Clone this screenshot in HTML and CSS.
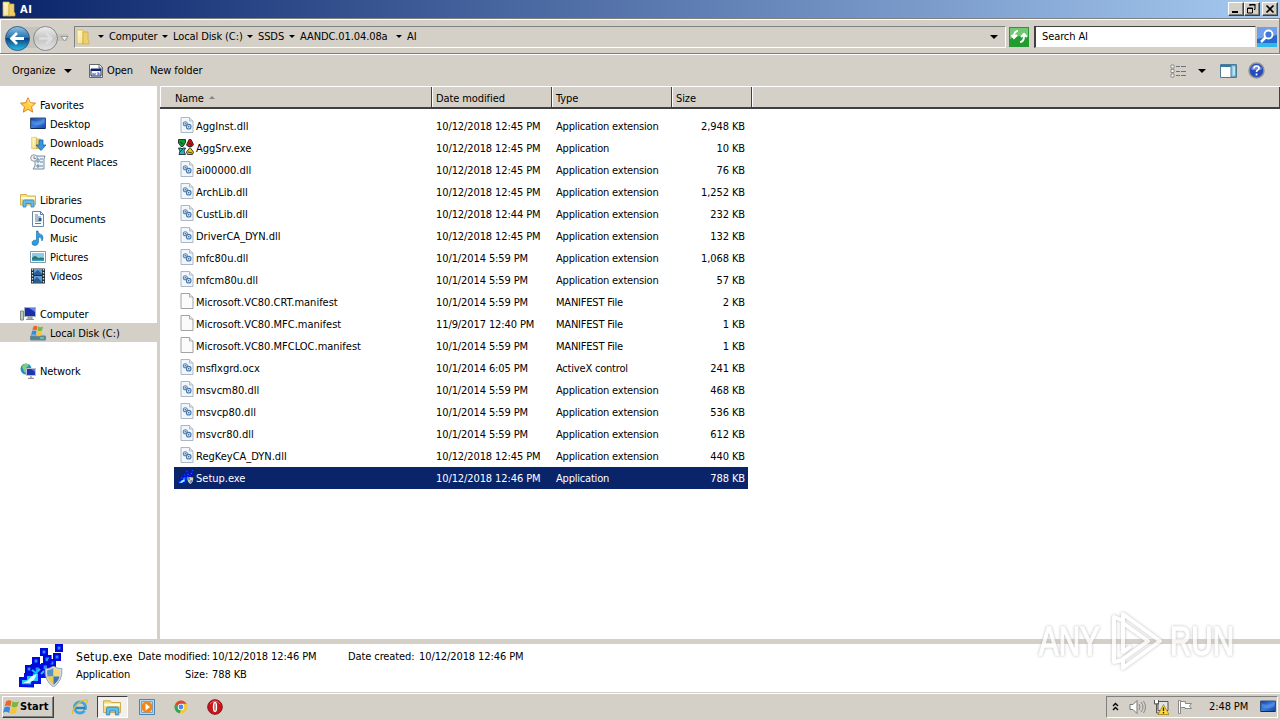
FILE: index.html
```html
<!DOCTYPE html>
<html lang="en">
  <head>
    <meta charset="UTF-8" />
    <title>AI</title>
    <link rel="stylesheet" href="styles.css" />
  </head>
  <body>
    <!-- icon sprites -->
    <svg class="sprites" width="0" height="0">
      <defs>
        <linearGradient id="gold" x2="1" y2="1"><stop stop-color="#fff6b8" /><stop offset="1" stop-color="#e5c04e" /></linearGradient>
        <linearGradient id="screen" x2="1" y2="1"><stop stop-color="#153a9c" /><stop offset=".5" stop-color="#3d7be0" /><stop offset="1" stop-color="#1740a0" /></linearGradient>
        <linearGradient id="blue" x2="0" y2="1"><stop stop-color="#8fc3e6" /><stop offset=".48" stop-color="#236fae" /><stop offset=".5" stop-color="#07437e" /><stop offset="1" stop-color="#2cc0ee" /></linearGradient>
        <linearGradient id="grey" x2="0" y2="1"><stop stop-color="#eeeeee" /><stop offset=".5" stop-color="#c4c4c4" /><stop offset="1" stop-color="#e4e4e4" /></linearGradient>
      </defs>
      <symbol id="folder" viewBox="0 0 16 16">
        <path d="M2 1h6l1 2v12H2z" fill="url(#gold)" stroke="#d9b84f" stroke-width=".7" />
        <path d="M8 3h5v8l1 1v3H8z" fill="#edd06a" stroke="#cfa940" stroke-width=".7" />
        <path d="M4 2v12M6 2v12" stroke="#fffbe0" />
      </symbol>
      <symbol id="library" viewBox="0 0 16 16">
        <path d="M.5 2.500h6l1 1.500h8v9H.5z" fill="#f7df82" stroke="#c9a23c" stroke-width=".8" />
        <path d="M1 6h14" stroke="#fffbdc" stroke-width="2" />
        <path d="M3 15V9.500q0-1.500 1.500-1.500h8q1.500 0 1.500 1.500V15h-3v-3.500H6V15z" fill="#63bce8" stroke="#3385b5" stroke-width=".8" />
      </symbol>
      <symbol id="dll" viewBox="0 0 14 16">
        <path d="M1 .5h8.500l3.500 3.500v11.500H1z" fill="#f1f6fc" stroke="#a3afbe" stroke-width=".9" />
        <path d="M9.500.5V4H13" fill="#dfe6ee" stroke="#a3afbe" stroke-width=".8" />
        <circle cx="5.300" cy="6.800" r="2" fill="#d8e8f8" stroke="#5d87b5" stroke-width="1.100" />
        <circle cx="8.700" cy="9.700" r="2.300" fill="#d8e8f8" stroke="#4877ab" stroke-width="1.100" />
        <circle cx="5.300" cy="6.800" r=".7" fill="#3a6599" /><circle cx="8.700" cy="9.700" r=".8" fill="#3a6599" />
      </symbol>
      <symbol id="blank" viewBox="0 0 14 16">
        <path d="M1 .5h8.500l3.500 3.500v11.500H1z" fill="#fbfbfb" stroke="#999" stroke-width=".9" />
        <path d="M9.500.5V4H13" fill="#eee" stroke="#999" stroke-width=".8" />
      </symbol>
      <symbol id="agg" viewBox="0 0 16 16">
        <g stroke="#111" stroke-width=".8">
          <path d="M.5.5h7v3L5 7.500H3L.5 4z" fill="#0a9c2e" /><path d="M8.500 6L11 .5h2l2.500 5L14 7.500h-4z" fill="#c11717" />
          <path d="M.5 9h2.500l1 1 1-1h2.500L6 12l1.500 3.500H1L2 12z" fill="#25b7bd" /><path d="M12 8.500l3.500 4.500-1 2.500h-5L8.500 13z" fill="#e2cd20" />
        </g>
        <path d="M2 3l3 2M11 4l3 2M2 13l3-3M10 13l4 1" stroke="#222" stroke-width=".8" />
      </symbol>
      <symbol id="shield" viewBox="0 0 18 20">
        <path d="M9 0q4 3 8 2.500Q18 14 9 20 0 14 1 2.500 5 3 9 0z" fill="#d7dce2" stroke="#8b949e" stroke-width=".8" />
        <path d="M9 2q-3 2-6 2-.4 3 .3 6H9z" fill="#5b92c4" /><path d="M9 2q3 2 6 2 .4 3-.3 6H9z" fill="#f4d873" />
        <path d="M3.300 10H9v7.800Q4.500 15 3.300 10z" fill="#eec94a" /><path d="M14.700 10H9v7.800q4.500-2.800 5.700-7.800z" fill="#3f77ac" />
      </symbol>
      <symbol id="setup" viewBox="0 0 46 46">
        <path d="M13 20h20v14H20v6h-8l-5-9z" fill="#0016e8" />
        <path d="M2.500 41.500v-7h5v-4h6v-4h8v12h-7v3.500z" fill="#21c8ff" stroke="#0010e8" stroke-width="3" />
        <path d="M5 39l4-2 5-5 5-2-3 6-5 3z" fill="#d9fdff" />
        <g fill="#2a8dff" stroke="#0008dc" stroke-width="2.600">
          <path d="M38.300 1.300h5.400v5.400h-5.400zM23.300 5.300h5.400v5.400h-5.400zM36.300 10.300h5.400v5.400h-5.400zM26.300 12.300h6v6h-6zM15.300 14.300h5.400v5.400h-5.400zM31.300 16.300h5.400v5.400h-5.400zM8.300 22.300h5.400v5.400H8.300zM16.300 22.300h6v6h-6zM24.300 20.300h6v6h-6z" />
        </g>
        <path d="M14 26l4 3 4-4M23 30l3-3" fill="none" stroke="#12c4ff" stroke-width="2" />
        <svg x="26" y="22" width="19" height="21"><use href="#shield" /></svg>
      </symbol>
      <symbol id="monitor" viewBox="0 0 16 16">
        <path d="M.5 2h15v10.500H.5z" fill="url(#screen)" stroke="#315277" />
        <path d="M1.500 4q6 4 13-1v4q-6 4-13 1z" fill="#68a9ef" opacity=".45" /><path d="M1 12.500h14" stroke="#122951" />
      </symbol>
      <symbol id="flag" viewBox="0 0 16 16">
        <path d="M3 3q3-2 5 0L7 8Q4 6 1.500 8z" fill="#ee6527" /><path d="M9 3q3 2 6 0l-1.500 5q-3 2-5.500 0z" fill="#79b73e" />
        <path d="M1.300 9q3-2 5.500 0l-1 5q-3-2-5.800 0z" fill="#3989dc" /><path d="M8 9q3 2 5.500 0L12 14q-3 2-5.300 0z" fill="#f8c52c" />
      </symbol>
    </svg>

    <header class="titlebar">
      <svg class="i16"><use href="#folder" /></svg>
      <b>AI</b>
      <div class="winbuttons">
        <span><svg viewBox="0 0 12 10"><path d="M2 8h6" stroke="#000" stroke-width="2" /></svg></span>
        <span><svg viewBox="0 0 12 10"><path d="M4 .5h5v5H8M4 0v2M3.500 1h6M1.500 4h5v5h-5zM1 4.500h6" fill="none" stroke="#000" /></svg></span>
        <span class="close"><svg viewBox="0 0 12 10"><path d="M2.500 1.500l7 7M9.500 1.500l-7 7" stroke="#000" stroke-width="1.700" /></svg></span>
      </div>
    </header>

    <nav class="navbar">
      <svg class="travel" viewBox="0 0 72 32">
        <path d="M17 6h28q8 0 11 7h12v7H56q-4 7-11 7H17z" fill="#c5c3be" />
        <circle cx="17.500" cy="17.500" r="12" fill="url(#blue)" stroke="#3b5f7d" />
        <path d="M24 17.500H12M17 12l-5.500 5.500L17 23" fill="none" stroke="#fff" stroke-width="2.800" />
        <circle cx="45.500" cy="17.500" r="12" fill="url(#grey)" stroke="#888" />
        <path d="M39 17.500h12M46 12l5.500 5.500L46 23" fill="none" stroke="#ddd" stroke-width="2.500" />
        <path d="M61 15.500h7L64.500 20z" fill="#eee" stroke="#888" stroke-width=".8" />
      </svg>
      <div class="address">
        <svg class="i16"><use href="#folder" /></svg>
        <i class="arrow first"></i><span class="c1">Computer</span>
        <i class="arrow"></i><span class="c2">Local Disk (C:)</span>
        <i class="arrow"></i><span class="c3">SSDS</span>
        <i class="arrow"></i><span class="c4">AANDC.01.04.08a</span>
        <i class="arrow"></i><span>AI</span>
        <i class="arrow drop"></i>
      </div>
      <svg class="refresh" viewBox="0 0 20 20">
        <path d="M0 0h20v20H0z" fill="#239b30" /><path d="M1 1h18v8Q9 8 1 12z" fill="#72c775" />
        <path d="M9 4Q5 4 5 10M2.500 8L5 11l3-3M11 15q4 0 4-6M12 10l3-3 3 3" fill="none" stroke="#fff" stroke-width="2" />
      </svg>
      <div class="search">Search AI</div>
      <svg class="go" viewBox="0 0 20 20">
        <path d="M0 0h20v20H0z" fill="#2869cf" /><path d="M0 0h20v8L0 12z" fill="#6fa0e9" /><path d="M0 16h20v4H0z" fill="#31b8ea" />
        <circle cx="11.500" cy="7.500" r="4" fill="#3f78d7" stroke="#fff" stroke-width="1.800" /><path d="M8.500 10.500L4 15" stroke="#fff" stroke-width="2.500" />
      </svg>
    </nav>

    <div class="toolbar">
      <span>Organize</span><i class="arrow big"></i>
      <svg class="i16 openicon" viewBox="0 0 16 16"><path d="M1.500 1.500h10l3 3v10h-13z" fill="#fff" stroke="#666" /><path d="M11 1v4h4" fill="none" stroke="#666" /><path d="M3 6h10v7H3z" fill="#f5f5f5" stroke="#0c246d" /><path d="M3 7h10" stroke="#0c246d" stroke-width="2" /><path d="M5 10v2h2v-2M9 10h2v2H9" fill="none" stroke="#4a69ab" /></svg>
      <span class="open">Open</span><span>New folder</span>
      <div class="viewtools">
        <svg width="16" height="16" viewBox="0 0 16 16"><path d="M1 2h3v3H1zM1 6.500h3v3H1zM1 11h3v3H1z" fill="#fff" stroke="#777" stroke-width=".8" /><path d="M6 3.500h4M11 3.500h5M6 8.500h4M11 8.500h5M6 12.500h4M11 12.500h5" stroke="#66727f" /></svg>
        <i class="arrow big"></i>
        <svg class="pane" width="17" height="16" viewBox="0 0 17 16"><path d="M.5 1.500h16v13H.5z" fill="#fff" stroke="#4e7893" /><path d="M1 3h10" stroke="#2d7cac" stroke-width="2" /><path d="M11 2h5v12h-5z" fill="#94cce5" stroke="#487b98" /><path d="M14 4v8" stroke="#e4f9ff" /></svg>
        <svg width="17" height="17" viewBox="0 0 17 17"><circle cx="8.500" cy="8.500" r="7.500" fill="#294bb8" stroke="#8b939e" stroke-width="1.500" /><path d="M3 6q5-6 11 0l-1 2H4z" fill="#6e8de0" /><path d="M6 6.500q0-2.500 2.500-2.500T11 6.200q0 1.300-1.500 2-1 .4-1 1.800M8.500 11.500v2" fill="none" stroke="#fff" stroke-width="1.700" /></svg>
      </div>
    </div>

    <main>
      <aside class="sidebar">
        <div class="group">
          <div class="node"><svg class="i16" viewBox="0 0 16 16"><path d="M8 .7l2.200 5 5.300.5-4 3.600 1.200 5.300L8 12.300l-4.700 2.800L4.500 9.800l-4-3.600 5.300-.5z" fill="#ffd044" stroke="#e17f1b" /><path d="M8 2.500l1.500 4.200 3 .5" fill="none" stroke="#fff0a0" /></svg>Favorites</div>
          <div class="node sub"><svg class="i16"><use href="#monitor" /></svg>Desktop</div>
          <div class="node sub"><svg class="i16" viewBox="0 0 16 16"><use href="#folder" width="13" height="16" /><path d="M9 5h4v5h3l-5 5.500L6 10h3z" fill="#3297df" stroke="#1565a2" stroke-width=".8" /></svg>Downloads</div>
          <div class="node sub"><svg class="i16" viewBox="0 0 16 16"><path d="M5 2h10l-1 3v10H3l2-3z" fill="#eef2f6" stroke="#7d8c99" /><path d="M7 5h2v3H7zM10 5h3M10 8h3M7 11h2v2H7zM10 12h3" fill="none" stroke="#5888af" /><circle cx="4" cy="4" r="3.300" fill="#eff3f6" stroke="#8f9ba5" /><path d="M4 2v2.500h2" fill="none" stroke="#607080" stroke-width=".8" /></svg>Recent Places</div>
        </div>
        <div class="group">
          <div class="node"><svg class="i16"><use href="#library" /></svg>Libraries</div>
          <div class="node sub"><svg class="i16" viewBox="0 0 16 16"><path d="M2.500.5h8l3 3v12h-11z" fill="#fbfdff" stroke="#70879f" /><path d="M10.500.5v3h3M5 4h3M5 6h6M5 8h3M5 10h6M5 12.500h6" fill="none" stroke="#597ca3" /><path d="M8.500 7h3v3h-3z" fill="#245a9e" /></svg>Documents</div>
          <div class="node sub"><svg class="i16" viewBox="0 0 16 16"><path d="M8 1q0 3 4 4 2 3 0 6 0-4-3.500-4v5.500Q8 15 5 15.500 2 15.500 2 13q0-3 4.500-3V1z" fill="#2f9de0" stroke="#1469a3" stroke-width=".6" /></svg>Music</div>
          <div class="node sub"><svg class="i16" viewBox="0 0 16 16"><path d="M.5 2.500h15v11H.5z" fill="#fff" stroke="#8199a8" /><path d="M2 4h12v8H2z" fill="#8dcbe7" /><path d="M2 9q3-4 6 0 3-1 6 0v3H2z" fill="#28796b" /><path d="M2 10.500h12V12H2z" fill="#389ccb" /></svg>Pictures</div>
          <div class="node sub"><svg class="i16" viewBox="0 0 16 16"><path d="M1 .5h14v15H1z" fill="#222d38" /><path d="M4 1h8v6H4zM4 8h8v7H4z" fill="#5d9dd4" /><path d="M4 5l4-3 4 4v1H4zM4 12l3-3 5 5v1H4z" fill="#2b5d91" /><path d="M2.500 1v14M13.500 1v14" stroke="#dbe4eb" stroke-width="1.300" stroke-dasharray="1.500 1.500" /></svg>Videos</div>
        </div>
        <div class="group">
          <div class="node"><svg class="i16" viewBox="0 0 16 16"><path d="M.5 5h3v9h-3z" fill="#bbcdbb" stroke="#7d8b81" /><path d="M4.500 1.500h11v9h-11z" fill="#1a2ea7" stroke="#aab2bf" /><path d="M9 2l6 0v4z" fill="#6481e2" /><path d="M8 11h4v2H8zM6 13.500h8" fill="#ccc" stroke="#8b9299" /></svg>Computer</div>
          <div class="node sub current"><svg class="i16" viewBox="0 0 16 16"><path d="M2 9h12l1.500 2H.5z" fill="#bec9cf" /><path d="M.5 11h15v4H.5z" fill="#4f8593" stroke="#738893" /><path d="M10 13h4" stroke="#8ef1bf" /><use href="#flag" x="1" y="-1" width="13" height="13" /></svg>Local Disk (C:)</div>
        </div>
        <div class="group">
          <div class="node"><svg class="i16" viewBox="0 0 16 16"><circle cx="6" cy="6" r="5.500" fill="#288dc9" /><path d="M2 3q4-4 7-1L6 5l2 2-3 3-2-4z" fill="#7dd07f" /><path d="M6.500 5.500h9v7h-9z" fill="#1c35b0" stroke="#bac2ce" /><path d="M11 6h4v3z" fill="#5e78db" /><path d="M11 13v2M8 15.300h6" stroke="#777" /></svg>Network</div>
        </div>
      </aside>

      <section class="files">
        <div class="columns">
          <div class="name">Name<i class="sort"></i></div><div>Date modified</div><div>Type</div><div class="size">Size</div><div class="rest"></div>
        </div>
        <div class="list">
          <div class="row"><svg><use href="#dll" /></svg><span>AggInst.dll</span><span>10/12/2018 12:45 PM</span><span>Application extension</span><span>2,948 KB</span></div>
          <div class="row"><svg class="wide"><use href="#agg" /></svg><span>AggSrv.exe</span><span>10/12/2018 12:45 PM</span><span>Application</span><span>10 KB</span></div>
          <div class="row"><svg><use href="#dll" /></svg><span>ai00000.dll</span><span>10/12/2018 12:45 PM</span><span>Application extension</span><span>76 KB</span></div>
          <div class="row"><svg><use href="#dll" /></svg><span>ArchLib.dll</span><span>10/12/2018 12:45 PM</span><span>Application extension</span><span>1,252 KB</span></div>
          <div class="row"><svg><use href="#dll" /></svg><span>CustLib.dll</span><span>10/12/2018 12:44 PM</span><span>Application extension</span><span>232 KB</span></div>
          <div class="row"><svg><use href="#dll" /></svg><span>DriverCA_DYN.dll</span><span>10/12/2018 12:45 PM</span><span>Application extension</span><span>132 KB</span></div>
          <div class="row"><svg><use href="#dll" /></svg><span>mfc80u.dll</span><span>10/1/2014 5:59 PM</span><span>Application extension</span><span>1,068 KB</span></div>
          <div class="row"><svg><use href="#dll" /></svg><span>mfcm80u.dll</span><span>10/1/2014 5:59 PM</span><span>Application extension</span><span>57 KB</span></div>
          <div class="row"><svg><use href="#blank" /></svg><span>Microsoft.VC80.CRT.manifest</span><span>10/1/2014 5:59 PM</span><span>MANIFEST File</span><span>2 KB</span></div>
          <div class="row"><svg><use href="#blank" /></svg><span>Microsoft.VC80.MFC.manifest</span><span>11/9/2017 12:40 PM</span><span>MANIFEST File</span><span>1 KB</span></div>
          <div class="row"><svg><use href="#blank" /></svg><span>Microsoft.VC80.MFCLOC.manifest</span><span>10/1/2014 5:59 PM</span><span>MANIFEST File</span><span>1 KB</span></div>
          <div class="row"><svg><use href="#dll" /></svg><span>msflxgrd.ocx</span><span>10/1/2014 6:05 PM</span><span>ActiveX control</span><span>241 KB</span></div>
          <div class="row"><svg><use href="#dll" /></svg><span>msvcm80.dll</span><span>10/1/2014 5:59 PM</span><span>Application extension</span><span>468 KB</span></div>
          <div class="row"><svg><use href="#dll" /></svg><span>msvcp80.dll</span><span>10/1/2014 5:59 PM</span><span>Application extension</span><span>536 KB</span></div>
          <div class="row"><svg><use href="#dll" /></svg><span>msvcr80.dll</span><span>10/1/2014 5:59 PM</span><span>Application extension</span><span>612 KB</span></div>
          <div class="row"><svg><use href="#dll" /></svg><span>RegKeyCA_DYN.dll</span><span>10/12/2018 12:45 PM</span><span>Application extension</span><span>440 KB</span></div>
          <div class="row selected"><svg class="wide"><use href="#setup" /></svg><span>Setup.exe</span><span>10/12/2018 12:46 PM</span><span>Application</span><span>788 KB</span></div>
        </div>
      </section>
    </main>

    <section class="details">
      <svg class="preview"><use href="#setup" /></svg>
      <div class="info">
        <div class="line"><span class="filename">Setup.exe</span><span class="mod">Date modified:</span><span class="moddate">10/12/2018 12:46 PM</span><span class="created">Date created:</span><span class="date">10/12/2018 12:46 PM</span></div>
        <div class="line"><span class="kind">Application</span><span class="sizelabel">Size:</span><span>788 KB</span></div>
      </div>
    </section>

    <footer class="taskbar">
      <div class="start"><svg width="17" height="17"><use href="#flag" /></svg><b>Start</b></div>
      <div class="quick">
        <svg class="ie" width="18" height="18" viewBox="0 0 18 18"><circle cx="9" cy="9.500" r="5.500" fill="none" stroke="#3ba7df" stroke-width="3" /><path d="M4 10h10" stroke="#2587c8" stroke-width="2.500" /><path d="M14 12h3v2l-4-1z" fill="#d4d0c8" /><path d="M2 16Q0 14 5 8q6-7 11-6 1 1-1 4" fill="none" stroke="#ebba35" stroke-width="1.300" /></svg>
        <div class="active"><svg width="18" height="18"><use href="#library" /></svg></div>
        <svg class="wmp" width="16" height="16" viewBox="0 0 16 16"><path d="M.5.5h15v15H.5z" fill="#b7d9f1" stroke="#4d83ac" /><path d="M2.500 2.500h11v11h-11z" fill="none" stroke="#72a4c8" /><circle cx="8" cy="8" r="5.500" fill="#f38716" /><path d="M6.500 4.500L11 8l-4.500 3.500z" fill="#fff" /></svg>
        <svg class="chrome" width="14" height="14" viewBox="0 0 14 14"><circle cx="7" cy="7" r="6.500" fill="#f5c83b" /><path d="M1.400 3.800A6.500 6.500 0 0 1 12.600 3.800H7L4.300 8.500z" fill="#dc4638" /><path d="M1.400 3.800l3 5L7 10l-1.500 3.400A6.500 6.500 0 0 1 1.400 3.800z" fill="#31a457" /><circle cx="7" cy="7" r="3.200" fill="#fff" /><circle cx="7" cy="7" r="2.400" fill="#478be8" /></svg>
        <svg width="16" height="16" viewBox="0 0 16 16"><circle cx="8" cy="8" r="7.300" fill="#c5161e" stroke="#8b1318" /><path d="M3 5q5-6 10 0" fill="none" stroke="#e76669" /><ellipse cx="8" cy="8" rx="2.200" ry="5.200" fill="#fff" /><ellipse cx="8" cy="8" rx=".6" ry="4" fill="#b0343a" /></svg>
      </div>
      <div class="tray">
        <svg width="7" height="10" viewBox="0 0 7 10"><path d="M1 4l2.500-2.500L6 4M1 8l2.500-2.500L6 8" fill="none" stroke="#000" stroke-width="1.400" /></svg>
        <svg class="sound" width="17" height="16" viewBox="0 0 17 16"><path d="M1 5.500h3l4-4v13l-4-4H1z" fill="#fff" stroke="#777" /><path d="M10 5q2 3 0 6M12 3q4 5 0 10M14.500 2q4 6 0 12" fill="none" stroke="#888" /></svg>
        <svg class="net" width="16" height="16" viewBox="0 0 16 16"><path d="M5 2.500h10v9H5z" fill="#e4e4e4" stroke="#555" /><path d="M1.500 1v4h4V1M3.500 5v9H7" fill="none" stroke="#555" /><path d="M2 1v3h3V1z" fill="#fff" /><path d="M10.500 5.500L16 15.500H5z" fill="#ffd83c" stroke="#a48412" stroke-width=".8" /><path d="M10.500 8.500v3.500M10.500 13v1.500" stroke="#222" stroke-width="1.300" /></svg>
        <svg class="action" width="16" height="16" viewBox="0 0 16 16"><path d="M1.500 1.500h2v13h-2z" fill="#fff" stroke="#888" /><path d="M3.500 2.500h5v2h6l-2 2.500 2 2.500H8v-1H3.500z" fill="#fff" stroke="#888" /></svg>
        <span class="clock">2:48 PM</span>
        <svg class="i16"><use href="#monitor" /></svg>
      </div>
    </footer>

    <div class="watermark">
      <span>ANY</span>
      <svg width="54" height="62" viewBox="0 0 54 62"><path d="M12 10L4 7v45l8-2M13 4l37 27-37 27v-9l25-18-25-18zM13 13v29l8-6" fill="none" stroke="#fff" stroke-width="4" stroke-linejoin="round" /></svg>
      <span>RUN</span>
    </div>
  </body>
</html>
```
FILE: styles.css
```css
* {
  box-sizing: border-box;
}

body {
  margin: 0;
  width: 1280px;
  height: 720px;
  display: flex;
  flex-direction: column;
  overflow: hidden;
  position: relative;
  background: #d4d0c8;
  color: #000;
  font-family: 'DejaVu Sans Condensed', 'DejaVu Sans', sans-serif;
  font-stretch: condensed;
  font-size: 11px;
  letter-spacing: -0.1px;
  line-height: 14px;
  white-space: nowrap;
}

svg {
  display: block;
  flex: none;
}

.sprites {
  position: absolute;
}

.i16 {
  width: 16px;
  height: 16px;
}

/* title bar */
.titlebar {
  height: 18px;
  flex: none;
  display: flex;
  align-items: center;
  gap: 3px;
  padding: 0 2px 0 1px;
  color: #fff;
  background: linear-gradient(90deg, #0a246a, #a6caf0);
}

.titlebar b {
  padding-top: 1px;
  letter-spacing: 0.5px;
}

.winbuttons {
  margin-left: auto;
  display: flex;
}

.winbuttons span {
  width: 16px;
  height: 14px;
  padding: 1px;
  background: #d4d0c8;
  border: 1px solid;
  border-color: #fff #404040 #404040 #fff;
  box-shadow: inset -1px -1px #808080;
}

.winbuttons svg {
  width: 12px;
  height: 10px;
}

.winbuttons .close {
  margin-left: 2px;
}

/* address bar */
.navbar {
  height: 36px;
  flex: none;
  display: flex;
  align-items: center;
  padding: 1px 2px 0 0;
  border-top: 1px solid #808080;
  border-right: 1px solid #808080;
  border-bottom: 1px solid #808080;
  box-shadow: inset 1px 1px #fff;
}

.travel {
  width: 72px;
  height: 32px;
}

.address {
  width: 932px;
  height: 22px;
  margin-left: 2px;
  display: flex;
  align-items: center;
  border: 1px solid;
  border-color: #808080 #fff #fff #808080;
}

.arrow {
  width: 0;
  height: 0;
  margin: 0 5px 0 6px;
  border: 3px solid transparent;
  border-top-color: #000;
  border-bottom: 0;
}

.arrow.first {
  margin-left: 7px;
}

.c1 {
  width: 47px;
}

.c2 {
  width: 68px;
}

.c3 {
  width: 25px;
}

.c4 {
  width: 90px;
}

.arrow.drop {
  margin: 0 7px 0 auto;
}

.arrow.big,
.arrow.drop {
  border-width: 4px 4px 0;
}

.refresh,
.go {
  width: 20px;
  height: 20px;
}

.refresh {
  margin: 0 5px 0 3px;
}

.search {
  width: 222px;
  height: 22px;
  padding: 3px 6px;
  background: #fff;
  border: 1px solid;
  border-color: #404040 #d4d0c8 #d4d0c8 #404040;
  border-left-width: 2px;
}

.go {
  margin-left: 1px;
}

/* command bar */
.toolbar {
  height: 32px;
  flex: none;
  display: flex;
  align-items: center;
  padding: 0 15px 0 12px;
  border-top: 1px solid #fff;
}

.toolbar > span:first-child {
  width: 46px;
}

.openicon {
  margin-left: 11px;
}

.open {
  width: 43px;
  margin-left: 3px;
}

.viewtools {
  display: flex;
  align-items: center;
  margin-left: auto;
}

.viewtools .arrow {
  margin: 0 14px 0 12px;
}

.pane {
  margin-right: 11px;
}

/* explorer panes */
main {
  height: 553px;
  flex: none;
  display: flex;
}

.sidebar {
  width: 157px;
  padding-top: 9px;
  background: #fff;
}

.group {
  margin-bottom: 19px;
}

.node {
  height: 19px;
  display: flex;
  align-items: center;
  gap: 4px;
  padding: 2px 0 0 20px;
}

.node svg {
  margin-top: -2px;
}

.node.sub {
  padding-left: 30px;
}

.node.current {
  background: #d4d0c8;
}

.files {
  flex: 1;
  margin-left: 3px;
  background: #fff;
}

.columns {
  height: 23px;
  display: flex;
  background: #d4d0c8;
  border-top: 1px solid #fff;
  border-bottom: 2px solid #404040;
}

.columns div {
  width: 120px;
  padding: 5px 3px 0;
  border-left: 1px solid #fff;
  border-right: 1px solid #404040;
}

.columns .name {
  width: 272px;
  padding-left: 14px;
  display: flex;
}

.columns .size {
  width: 80px;
}

.columns .rest {
  flex: 1;
}

.sort {
  width: 0;
  height: 0;
  margin: 4px 0 0 5px;
  border: 3px solid transparent;
  border-bottom-color: #858585;
  border-top: 0;
}

.list {
  width: 574px;
  margin: 6px 0 0 14px;
}

.row {
  height: 22px;
  padding-top: 2px;
  display: grid;
  grid-template-columns: 22px 240px 120px 120px 69px;
  align-items: center;
}

.row svg {
  width: 14px;
  height: 16px;
  margin: -4px 0 0 6px;
}

.row svg.wide {
  width: 16px;
  margin-left: 4px;
}

.row span:nth-child(2) {
  letter-spacing: 0;
}

.row span:nth-child(4) {
  letter-spacing: -0.2px;
}

.row span:last-child {
  text-align: right;
}

.row.selected {
  background: #0a246a;
  color: #fff;
}

/* details pane */
.details {
  height: 53px;
  flex: none;
  display: flex;
  background: #fff;
  border-top: 5px solid #d4d0c8;
}

.preview {
  width: 46px;
  height: 46px;
  margin-left: 18px;
}

.info {
  padding: 4px 0 0 12px;
}

.line {
  height: 18px;
  display: flex;
  align-items: center;
}

.filename {
  width: 62px;
  font-size: 12px;
  letter-spacing: 0.3px;
}

.mod {
  width: 74px;
}

.moddate {
  width: 136px;
}

.created {
  width: 71px;
}

.kind {
  width: 109px;
}

.sizelabel {
  width: 27px;
}

/* taskbar */
.taskbar {
  flex: 1;
  display: flex;
  align-items: center;
  padding: 0 2px;
  border-top: 1px solid #d4d0c8;
  box-shadow: inset 0 1px #fff;
}

.start {
  width: 52px;
  height: 22px;
  display: flex;
  align-items: center;
  border: 1px solid;
  border-color: #fff #404040 #404040 #fff;
  box-shadow: inset -1px -1px #808080;
}

.start b {
  padding-top: 1px;
  letter-spacing: 0.1px;
}

.quick {
  display: flex;
  align-items: center;
  margin-left: 17px;
}

.active {
  width: 31px;
  height: 22px;
  margin: 0 11px 0 8px;
  padding: 1px 0 0 5px;
  background: #f2f0ec;
  border: 1px solid;
  border-color: #404040 #fff #fff #404040;
}

.chrome {
  margin: 0 19px;
}

.tray {
  width: 172px;
  height: 22px;
  margin-left: auto;
  display: flex;
  align-items: center;
  padding-left: 5px;
  border: 1px solid;
  border-color: #808080 #fff #fff #808080;
}

.sound {
  margin-left: 10px;
}

.net {
  margin: 0 8px 0 7px;
}

.clock {
  width: 51px;
  margin-left: 16px;
  padding-top: 1px;
}

/* overlay logo */
.watermark {
  position: absolute;
  left: 1039px;
  top: 610px;
  display: flex;
  align-items: center;
  gap: 6px;
  color: #fff;
  font: 41px/62px 'Liberation Sans', sans-serif;
  letter-spacing: 0;
  opacity: 0.8;
  filter: drop-shadow(0 0 1.5px #aaa);
}

.watermark span {
  width: 65px;
  transform: scaleX(0.72);
  transform-origin: left;
  -webkit-text-stroke: 1.5px #fff;
}
```
